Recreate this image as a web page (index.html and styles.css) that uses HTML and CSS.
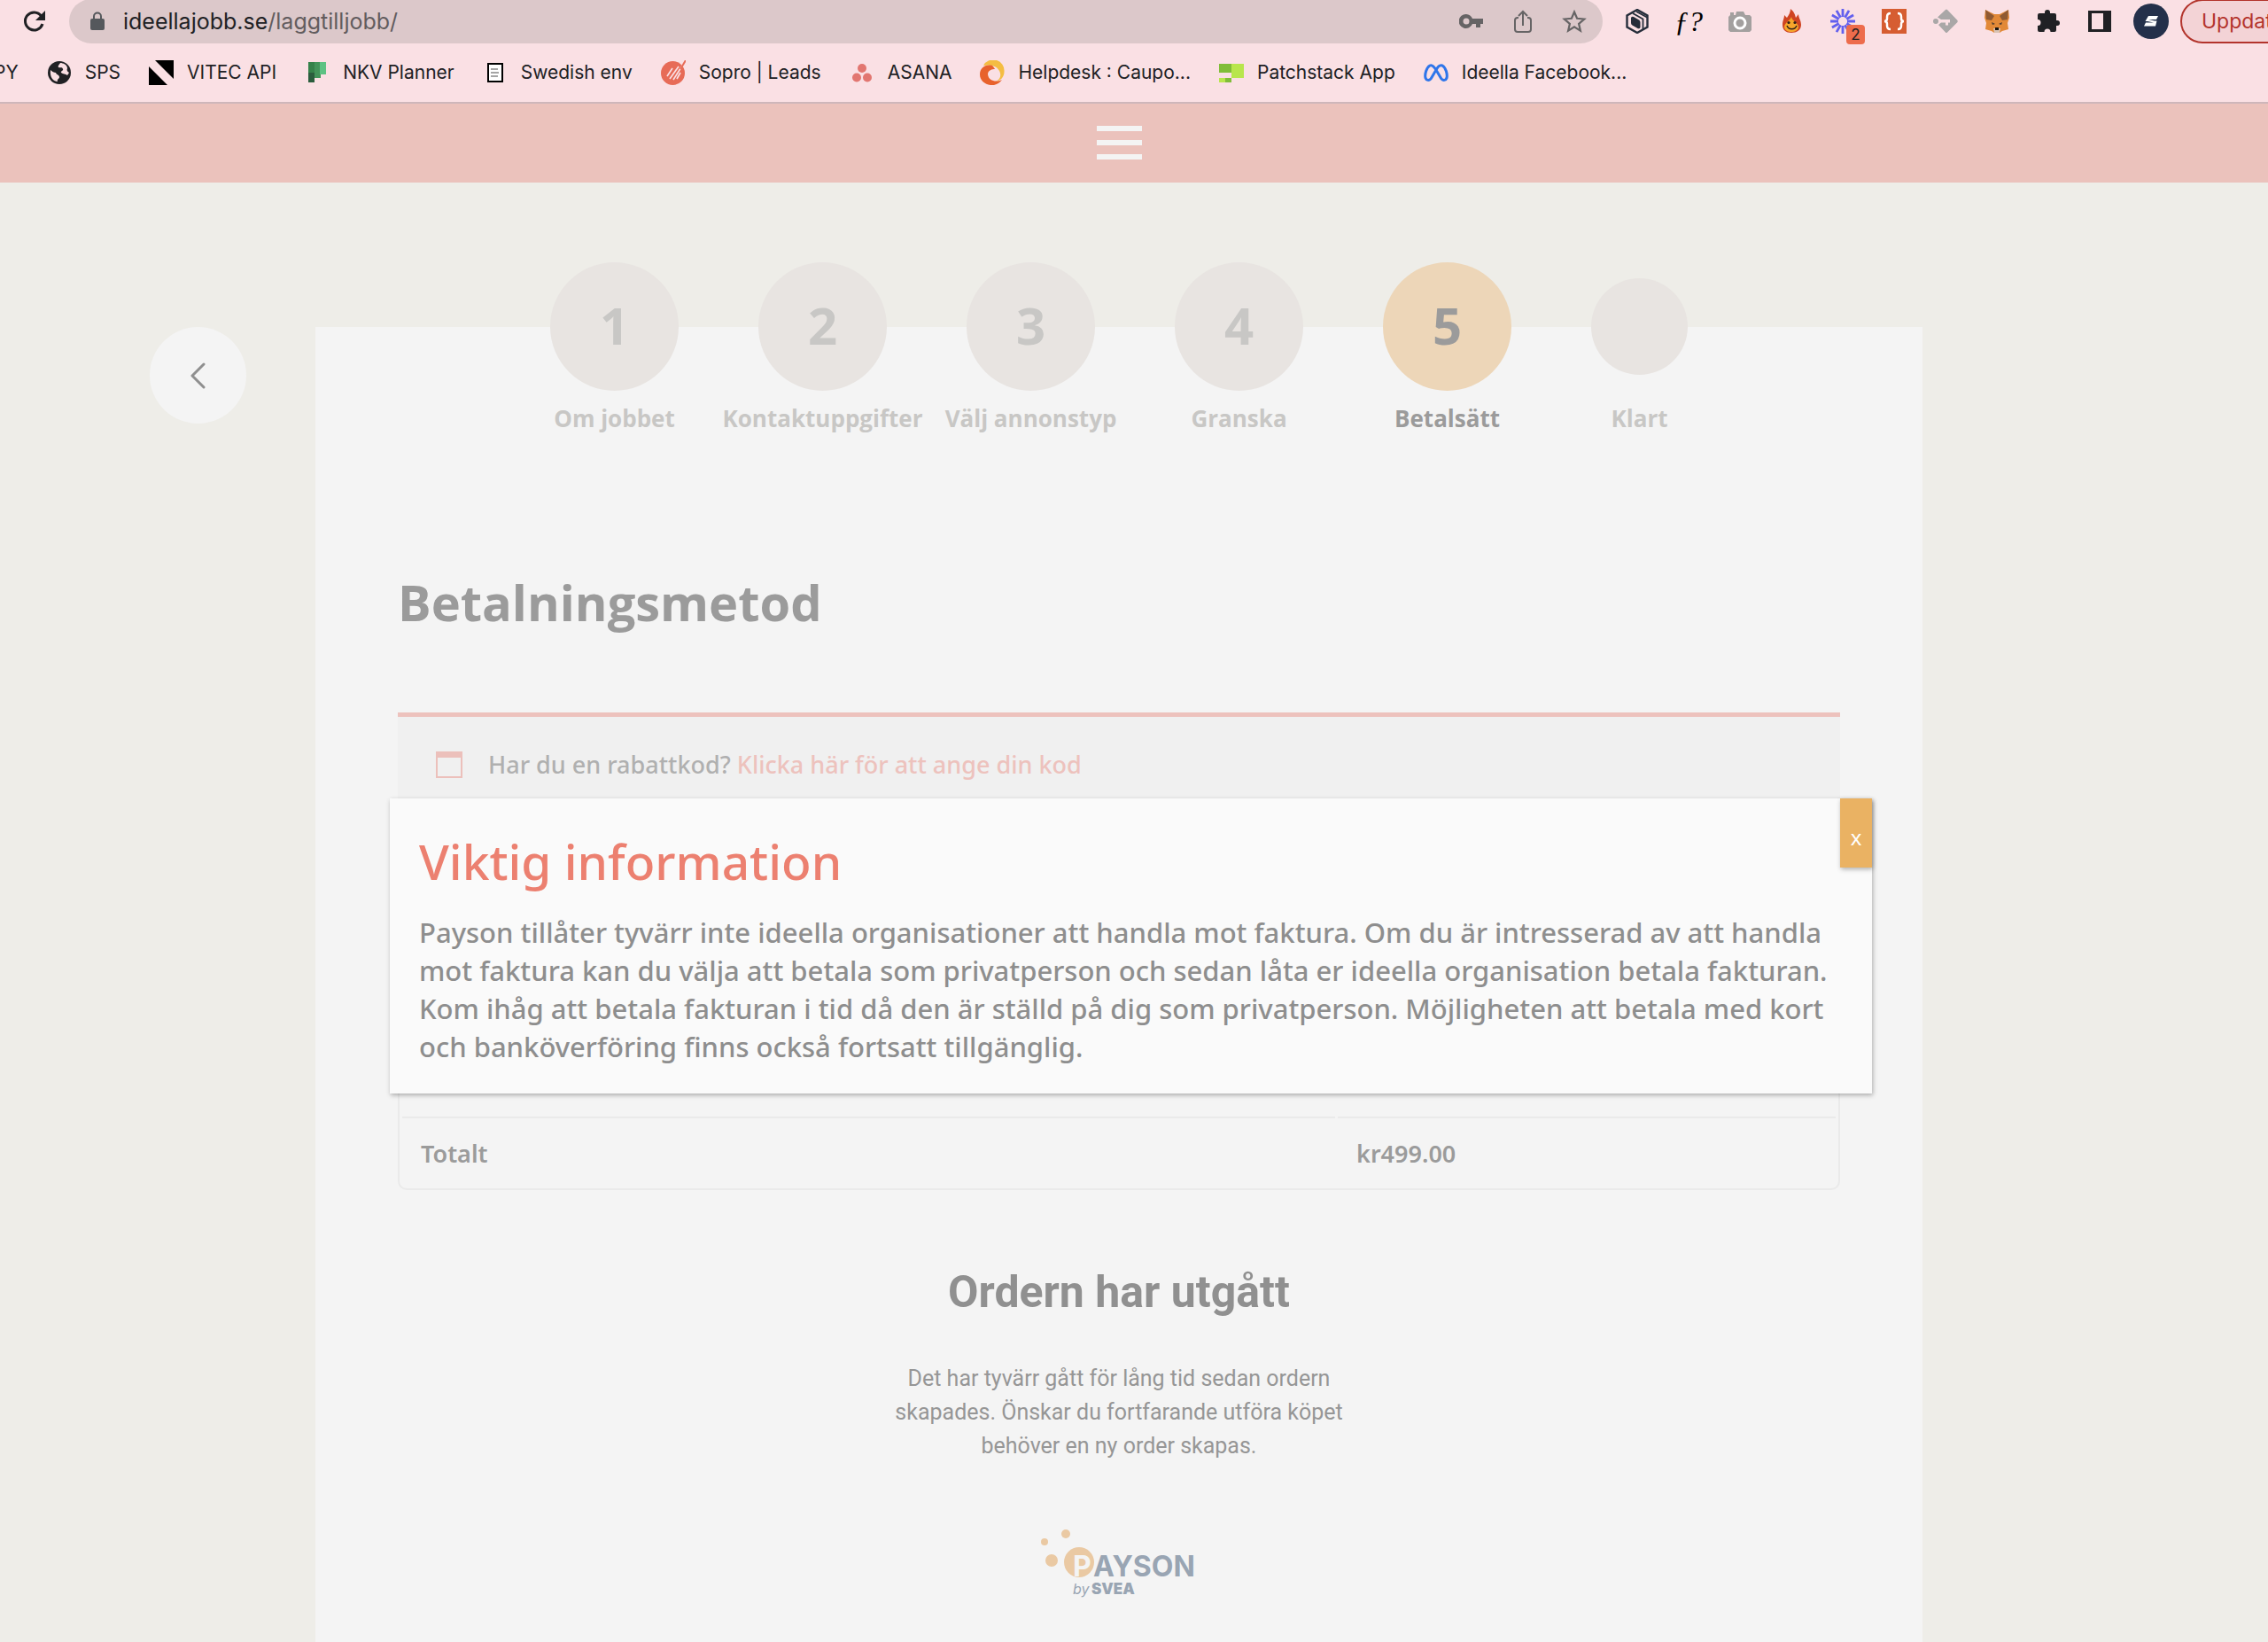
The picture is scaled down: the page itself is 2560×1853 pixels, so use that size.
FILE: index.html
```html
<!DOCTYPE html>
<html lang="sv">
<head>
<meta charset="utf-8">
<title>Betalsätt – ideellajobb.se</title>
<link rel="stylesheet" href="styles.css">
</head>
<body>
<div class="browser">
  <div class="toolbar">
    <button class="tool" aria-label="Ladda om"><svg class="icon" viewBox="0 0 28 28"><path d="M22.500 8A10 10 0 1 0 24 17" fill="none" stroke="#202124" stroke-width="3"/><path d="M27 2v11H16z" fill="#202124"/></svg></button>
    <div class="address">
      <svg class="lock" viewBox="0 0 16 22"><rect y="8" width="16" height="13" rx="2" fill="#55585c"/><path d="M4 9V5.500a4 4 0 0 1 8 0V9" fill="none" stroke="#55585c" stroke-width="2"/></svg>
      <a class="url" href="#"><span class="host">ideellajobb.se</span>/laggtilljobb/</a>
      <div class="address-tools">
        <button class="tool" aria-label="Lösenord"><svg class="icon" viewBox="0 0 28 28"><path fill-rule="evenodd" d="M8 6a8 8 0 1 0 7 11h4v4h5v-4h3v-6H15A8 8 0 0 0 8 6zm0 4.500a3.500 3.500 0 1 1 0 7 3.500 3.500 0 0 1 0-7z" fill="#666465"/></svg></button>
        <button class="tool" aria-label="Dela"><svg class="icon" viewBox="0 0 28 28"><path d="M9 10H8a3 3 0 0 0-3 3v10a3 3 0 0 0 3 3h12a3 3 0 0 0 3-3V13a3 3 0 0 0-3-3h-1M14 19V3M9 8l5-5 5 5" fill="none" stroke="#666465" stroke-width="2"/></svg></button>
        <button class="tool" aria-label="Bokmärk"><svg class="icon" viewBox="0 0 28 28"><path d="M14 3.500l3.100 7.300 8.100.7-6.100 5.300 1.800 7.800-6.900-4.200-6.900 4.200 1.800-7.800-6.100-5.300 8.100-.7z" fill="none" stroke="#666465" stroke-width="2.200"/></svg></button>
      </div>
    </div>
    <div class="extensions">
      <button class="tool" aria-label="Kub"><svg class="icon" viewBox="0 0 28 28"><path d="M14 1l11.500 6.500v13L14 27 2.500 20.500v-13z" fill="none" stroke="#252d3a" stroke-width="2.400"/><path d="M9 5l11.500 6.500V23M13 3l12 6.500" fill="none" stroke="#252d3a" stroke-width="1.800"/><path d="M7 10q1-2 3-1l6 3.500q1.500 1 1.500 2.500v6q-1 2-3 1l-6-3.500Q7 17.500 7 16z" fill="#252d3a"/></svg></button>
      <button class="tool formula" aria-label="Typsnitt">ƒ?</button>
      <button class="tool" aria-label="Kamera"><svg class="icon" viewBox="0 0 28 28"><path d="M3 7V4h4v3h2l1-4h8l2 4h5l2 2v15l-2 2H3l-2-2V9z" fill="#a3a09f"/><circle cx="14" cy="16" r="6" fill="#a3a09f" stroke="#fff" stroke-width="3"/></svg></button>
      <button class="tool" aria-label="Låga"><svg class="icon" viewBox="0 0 28 28"><path d="M13 0c5 4 5 7 6 10l3-4c0 4 3 7 3 12 0 6-5 9-11 9S4 24 4 18c0-5 2-7 2-11l3 3c2-3 4-6 4-10z" fill="#cf4422"/><path d="M14 9c1 5 7 6 8 11 0 4-4 6-8 6s-8-2-8-6c1-5 6-6 8-11z" fill="#f6a52b"/><circle cx="11" cy="15.500" r="1.600" fill="#33201a"/><circle cx="18" cy="15.500" r="1.600" fill="#33201a"/><path d="M9 19c2 5 9 5 11 0" fill="none" stroke="#33201a" stroke-width="1.500"/></svg></button>
      <button class="tool badged" aria-label="Stjärna"><svg class="icon" viewBox="0 0 28 28"><path d="M14 0v9M14 19v9M0 14h9M19 14h9M7 1.900l4.500 7.800M16.500 18.300l4.500 7.800M1.900 7l7.800 4.500M18.300 16.500l7.800 4.500M1.900 21l7.800-4.500M18.300 11.500L26.100 7M7 26.100l4.500-7.800M16.500 9.700L21 1.900" stroke="#6360ee" stroke-width="2.800"/></svg><span class="badge">2</span></button>
      <button class="tool" aria-label="Kod"><svg class="icon" viewBox="0 0 28 28"><rect width="28" height="28" fill="#d65d31"/><path d="M10 5Q6 5 6 9v2q0 3-3 3 3 0 3 3v2q0 4 4 4M18 5q4 0 4 4v2q0 3 3 3-3 0-3 3v2q0 4-4 4" fill="none" stroke="#fff" stroke-width="2.500"/></svg></button>
      <button class="tool" aria-label="Ruta"><svg class="icon" viewBox="0 0 28 28"><circle cx="3" cy="14" r="3" fill="#a9a7a7"/><path d="M14 1q1-1 2 0l11.500 12q.5 1 0 2L16 26.500q-1 1-2 0L6 18l3-2.500h5v3h3v-3h2V12H9L5 9.500z" fill="#a9a7a7"/></svg></button>
      <button class="tool" aria-label="Räv"><svg class="icon" viewBox="0 0 28 28"><path d="M1 1l10 5h6l10-5 1 9-2 6 1 7-7 2-3 2h-6l-3-2-7-2 1-7-2-6z" fill="#e28937"/><path d="M1 1l10 7-3 5-6-1zM27 1L17 8l3 5 6-1z" fill="#8f5a33"/><path d="M8 15l4 2-3 1zM20 15l-4 2 3 1z" fill="#4b3a30"/><path d="M10 22h8l-1 5h-6z" fill="#d9c3b4"/><path d="M12 21h4v3h-4z" fill="#16120f"/></svg></button>
      <button class="tool" aria-label="Tillägg"><svg class="icon" viewBox="0 0 28 28"><path d="M10 4a3 3 0 0 1 6 0v1h5a2 2 0 0 1 2 2v6h1a3 3 0 0 1 0 6h-1v5a2 2 0 0 1-2 2h-4.500a3.500 3.500 0 0 0-7 0H4a2 2 0 0 1-2-2v-5a3.500 3.500 0 0 0 0-7V7a2 2 0 0 1 2-2h6z" fill="#202124"/></svg></button>
      <button class="tool" aria-label="Sidopanel"><svg class="icon" viewBox="0 0 28 28"><path fill-rule="evenodd" d="M1 2h26v24H1zm4 3v18h13V5z" fill="#202124"/></svg></button>
      <button class="tool avatar" aria-label="Profil"><svg class="face" viewBox="0 0 40 40"><circle cx="20" cy="20" r="20" fill="#24304a"/><path d="M17 14h11l-2 4h-9l7 1.500h2.500L25 25.500H12l2-4h9l-7-1.500h-2.500z" fill="#fff"/></svg></button>
    </div>
    <button class="update">Uppdatera</button>
  </div>
  <nav class="bookmarks">
    <a class="bookmark" href="#">PY</a>
    <a class="bookmark" href="#"><svg class="icon" viewBox="0 0 28 28"><circle cx="14" cy="14" r="13" fill="#202124"/><path d="M4 11c2 2 4 3 6 3 1 3 4 2 4 5 0 2-3 2-2 5-5 0-9-5-8-13zM15 3c-1 2-3 3-2 5 2 1 4-1 5 2 1 2-3 2-2 4 2 2 5 1 7 3l2-3c-2-1-3-3-2-5 0-4-5-6-8-6z" fill="#fae0e4"/></svg>SPS</a>
    <a class="bookmark" href="#"><svg class="icon" viewBox="0 0 28 28"><path d="M0 7l21 21H0zM7 0h21v21z"/></svg>VITEC API</a>
    <a class="bookmark" href="#"><svg class="icon" viewBox="0 0 28 28"><path d="M4 2h7v23H4z" fill="#35824a"/><path d="M4 14h7v11H4z" fill="#2a5d3d"/><path d="M11 2h7v18h-7z" fill="#43945a"/><path d="M17 2h7v14h-7z" fill="#5dc283"/></svg>NKV Planner</a>
    <a class="bookmark" href="#"><svg class="icon" viewBox="0 0 28 28"><path d="M6 4h16v20H6z" fill="#fff" stroke="#000" stroke-width="2"/><path d="M9 10h8M9 14h9M9 18h8" stroke="#888" stroke-width="1.500"/></svg>Swedish env</a>
    <a class="bookmark" href="#"><svg class="icon" viewBox="0 0 28 28"><circle cx="13.500" cy="14.500" r="13.500" fill="#e76b57"/><path d="M28 0L14 22M7 18l6-9M10 21l10-14M18 21l4-7" stroke="#fae0e4" stroke-width="1.700"/><path d="M28 0l-6 10" stroke="#e76b57" stroke-width="2"/></svg>Sopro | Leads</a>
    <a class="bookmark" href="#"><svg class="icon" viewBox="0 0 28 28"><g fill="#e27670"><circle cx="14" cy="9" r="5"/><circle cx="8" cy="19.500" r="5"/><circle cx="20" cy="19.500" r="5"/></g></svg>ASANA</a>
    <a class="bookmark" href="#"><svg class="icon" viewBox="0 0 28 28"><path d="M4 6A12.500 12.500 0 0 1 27.500 13c0 6-4 10-10 11 5-2 7-6 5-11-2-6-10-9-18.500-7z" fill="#f4bd42"/><path d="M14 6C6 4 0 9 0 16c0 8 8 13 16 12 4-1 7-3 9-6-6 3-15 2-16-6 0-5 5-6 8-6-1-2-2-3-3-4z" fill="#e8622c"/></svg>Helpdesk : Caupo...</a>
    <a class="bookmark" href="#"><svg class="icon" viewBox="0 0 28 28"><path d="M0 4h14v10H0zM7 20h7v5H7z" fill="#80bd38"/><path d="M14 4h14v16H14zM0 20h7v5H0z" fill="#b8e64c"/></svg>Patchstack App</a>
    <a class="bookmark" href="#"><svg class="icon" viewBox="0 0 28 28"><path d="M14 11C11 6 9 5 7 6c-4 2-6 10-5 14 1 3 4 3 6 1 2-3 4-7 6-10 2-4 4-6 7-5 4 2 6 10 5 14-1 3-4 3-6 1-2-3-4-7-6-10z" fill="none" stroke="#2e75ea" stroke-width="3"/></svg>Ideella Facebook...</a>
  </nav>
</div>

<header class="site-header">
  <button class="menu" aria-label="Meny"><span class="bar"></span><span class="bar"></span><span class="bar"></span></button>
</header>

<main class="page">
  <button class="back" aria-label="Tillbaka"><svg class="chevron" viewBox="0 0 18 30"><path d="M15 2L2 15l13 13" fill="none" stroke="#8f8f8f" stroke-width="3" stroke-linecap="round" stroke-linejoin="round"/></svg></button>
  <section class="panel">
    <ol class="steps">
      <li class="step"><span class="dot-box"><span class="dot">1</span></span><span class="label">Om jobbet</span></li>
      <li class="step"><span class="dot-box"><span class="dot">2</span></span><span class="label">Kontaktuppgifter</span></li>
      <li class="step"><span class="dot-box"><span class="dot">3</span></span><span class="label">Välj annonstyp</span></li>
      <li class="step"><span class="dot-box"><span class="dot">4</span></span><span class="label">Granska</span></li>
      <li class="step current"><span class="dot-box"><span class="dot">5</span></span><span class="label">Betalsätt</span></li>
      <li class="step last"><span class="dot-box"><span class="dot"></span></span><span class="label">Klart</span></li>
    </ol>
    <h1 class="title">Betalningsmetod</h1>
    <div class="checkout">
      <div class="coupon">
        <svg class="coupon-icon" viewBox="0 0 30 30"><path d="M1 1h28v28H1z" fill="none" stroke="#ecc0bb" stroke-width="2"/><path d="M0 0h30v7H0z" fill="#ecc0bb"/></svg>
        <p class="coupon-text">Har du en rabattkod? <a class="coupon-link" href="#">Klicka här för att ange din kod</a></p>
      </div>
      <table class="order">
        <tbody>
          <tr class="spacer"><td></td><td></td></tr>
          <tr><th class="cell total" scope="row">Totalt</th><td class="cell amount">kr499.00</td></tr>
        </tbody>
      </table>
      <div class="popup" role="dialog" aria-labelledby="popup-title">
        <button class="close">x</button>
        <h2 class="popup-title" id="popup-title">Viktig information</h2>
        <p class="popup-text">Payson tillåter tyvärr inte ideella organisationer att handla mot faktura. Om du är intresserad av att handla<br>mot faktura kan du välja att betala som privatperson och sedan låta er ideella organisation betala fakturan.<br>Kom ihåg att betala fakturan i tid då den är ställd på dig som privatperson. Möjligheten att betala med kort<br>och banköverföring finns också fortsatt tillgänglig.</p>
      </div>
    </div>
    <div class="expired">
      <h2 class="expired-title">Ordern har utgått</h2>
      <p class="expired-text">Det har tyvärr gått för lång tid sedan ordern<br>skapades. Önskar du fortfarande utföra köpet<br>behöver en ny order skapas.</p>
      <svg class="payson" viewBox="0 0 176 84" role="img" aria-label="Payson by Svea">
        <g fill="#eac9a3"><circle cx="4" cy="15" r="4"/><circle cx="28" cy="6" r="5"/><circle cx="12" cy="36" r="7"/><circle cx="43" cy="38" r="17"/></g>
        <text class="logo-p" x="36" y="54">P</text>
        <text class="logo-name" x="59" y="54">AYSON</text>
        <text class="logo-by" x="36" y="74">by</text>
        <text class="logo-svea" x="57" y="74">SVEA</text>
      </svg>
    </div>
  </section>
</main>
</body>
</html>
```
FILE: styles.css
```css
* { box-sizing: border-box; }

body {
  margin: 0;
  min-height: 100vh;
  display: flex;
  flex-direction: column;
  background: #eeede8;
  font-family: "Noto Sans", "Open Sans", sans-serif;
  overflow-x: hidden;
}

h1, h2, p, ol { margin: 0; padding: 0; }
button { border: 0; padding: 0; background: none; font: inherit; }
a { color: inherit; text-decoration: none; }

/* Browser chrome */
.browser {
  background: #fae0e4;
  border-bottom: 2px solid #ceb6ba;
  font-family: Inter, Roboto, sans-serif;
  color: #202124;
  overflow: hidden;
}

.toolbar {
  display: flex;
  align-items: center;
  height: 48px;
  padding-left: 24px;
}

.tool {
  display: flex;
  flex: none;
  width: 28px;
  height: 28px;
  align-items: center;
  justify-content: center;
}

.icon { display: block; flex: none; width: 28px; height: 28px; }

.address {
  flex: 1;
  display: flex;
  align-items: center;
  height: 50px;
  margin: 0 25px 0 26px;
  padding: 0 18px 0 24px;
  border-radius: 25px;
  background: #dcc8ca;
}

.lock { width: 16px; height: 22px; margin-right: 21px; }
.url { font-size: 25px; line-height: 28px; color: #625c5e; }
.host { color: #202124; }
.address-tools { display: flex; gap: 30px; margin-left: auto; }
.extensions { display: flex; align-items: center; gap: 30px; }

.formula {
  font-family: "Liberation Serif", serif;
  font-size: 32px;
  font-style: italic;
  color: #000;
}

.badged { position: relative; }

.badge {
  position: absolute;
  left: 18px;
  top: 18px;
  width: 21px;
  height: 22px;
  border-radius: 4px;
  background: #ed6c4c;
  color: #202124;
  font-size: 17px;
  line-height: 22px;
  text-align: center;
}

.avatar { width: 40px; height: 40px; margin: 0 -6px; }
.face { display: block; width: 40px; height: 40px; }

.update {
  flex: none;
  width: 160px;
  height: 50px;
  margin: 0 -61px 0 19px;
  padding-left: 22px;
  border: 2px solid #b3342c;
  border-radius: 25px;
  background: #f3d3d6;
  color: #b3342c;
  font-size: 23px;
  text-align: left;
}

.bookmarks {
  display: flex;
  align-items: center;
  gap: 32px;
  height: 67px;
  margin-left: -7px;
}

.bookmark {
  display: flex;
  align-items: center;
  gap: 15px;
  font-size: 21px;
  line-height: 28px;
  white-space: nowrap;
}

/* Site header */
.site-header {
  display: flex;
  justify-content: center;
  height: 89px;
  padding: 25px 34px 0 0;
  background: #ebc2bc;
}

.menu { display: flex; flex-direction: column; gap: 10px; width: 51px; height: 38px; }
.bar { display: block; width: 51px; height: 6px; background: #f4f4f4; }

/* Page */
.page {
  flex: 1;
  display: grid;
  grid-template-columns: 1fr minmax(0, 1814px) 1fr;
  padding: 163px 34px 0 0;
}

.back {
  display: flex;
  align-items: center;
  justify-content: center;
  justify-self: end;
  width: 109px;
  height: 109px;
  margin-right: 78px;
  border-radius: 50%;
  background: #f4f4f4;
}

.chevron { width: 18px; height: 30px; }

.panel { padding: 0 93px 45px; background: #f4f4f4; }

.steps {
  display: flex;
  justify-content: center;
  gap: 90px;
  margin-top: -73px;
  list-style: none;
  color: #c8c7c5;
  font-family: "Open Sans", sans-serif;
  font-weight: 700;
}

.step { display: flex; flex-direction: column; align-items: center; gap: 15px; width: 145px; }
.dot-box { display: flex; align-items: center; height: 145px; }

.dot {
  display: flex;
  align-items: center;
  justify-content: center;
  width: 145px;
  height: 145px;
  padding-bottom: 4px;
  border-radius: 50%;
  background: #e8e4e1;
  font-size: 58px;
  line-height: 72px;
}

.label { font-size: 26px; line-height: 32px; white-space: nowrap; }
.current { color: #9b9b9b; }
.current .dot { background: #edd6b8; }
.last { width: 109px; }
.last .dot { width: 109px; height: 109px; }

.title {
  margin-top: 155px;
  font-family: "Open Sans", sans-serif;
  font-size: 56px;
  font-weight: 700;
  line-height: 72px;
  color: #9b9b9b;
}

.checkout { position: relative; margin-top: 89px; }

.coupon {
  display: flex;
  align-items: center;
  gap: 29px;
  height: 113px;
  padding: 0 43px;
  border-top: 5px solid #edc2bd;
  background: #f0f0f0;
}

.coupon-icon { width: 30px; height: 30px; }
.coupon-text { font-size: 27px; line-height: 32px; color: #b0b0b0; font-weight: 500; }
.coupon-link { color: #edc2bd; }

.order {
  width: 100%;
  margin-top: 262px;
  border: 2px solid #eaeaea;
  border-radius: 10px;
  border-collapse: separate;
  border-spacing: 3px;
  table-layout: fixed;
  font-size: 27px;
  line-height: 32px;
  font-weight: 600;
  color: #9b9b9b;
}

.spacer { height: 73px; }
.spacer td:first-child { width: 1053px; }
.cell { height: 78px; padding: 4px 21px 0; border-top: 2px solid #eaeaea; font-weight: 600; text-align: left; }

/* Popup over the order summary */
.popup {
  position: absolute;
  top: 97px;
  left: -9px;
  right: -36px;
  padding: 37px 33px 31px;
  background: #fafafa;
  box-shadow: 1px 2px 5px rgba(0, 0, 0, .3);
  color: #8e8e8e;
}

.popup-title { font-size: 55px; line-height: 68px; font-weight: 500; color: #ec8070; }
.popup-text { margin-top: 25px; font-size: 31px; line-height: 43px; font-weight: 500; white-space: nowrap; }

.close {
  position: absolute;
  top: 0;
  right: 0;
  width: 36px;
  height: 78px;
  padding-top: 8px;
  background: #eab263;
  box-shadow: 1px 2px 5px rgba(0, 0, 0, .3);
  color: #fff;
  font-size: 24px;
}

/* Expired order */
.expired {
  display: flex;
  flex-direction: column;
  align-items: center;
  padding-top: 85px;
  font-family: Roboto, sans-serif;
  text-align: center;
  color: #909090;
}

.expired-title { font-size: 50px; line-height: 60px; font-weight: 700; }
.expired-text { margin-top: 49px; font-size: 25px; line-height: 38px; color: #969696; }
.payson { width: 176px; height: 84px; margin-top: 74px; font-family: Inter, sans-serif; }
.logo-p { font-size: 32px; font-weight: 700; fill: #f4f4f4; }
.logo-name { font-size: 32px; font-weight: 700; fill: #99a5b3; }
.logo-by { font-size: 16px; font-style: italic; fill: #99a5b3; }
.logo-svea { font-size: 17px; font-weight: 900; fill: #99a5b3; }
```
